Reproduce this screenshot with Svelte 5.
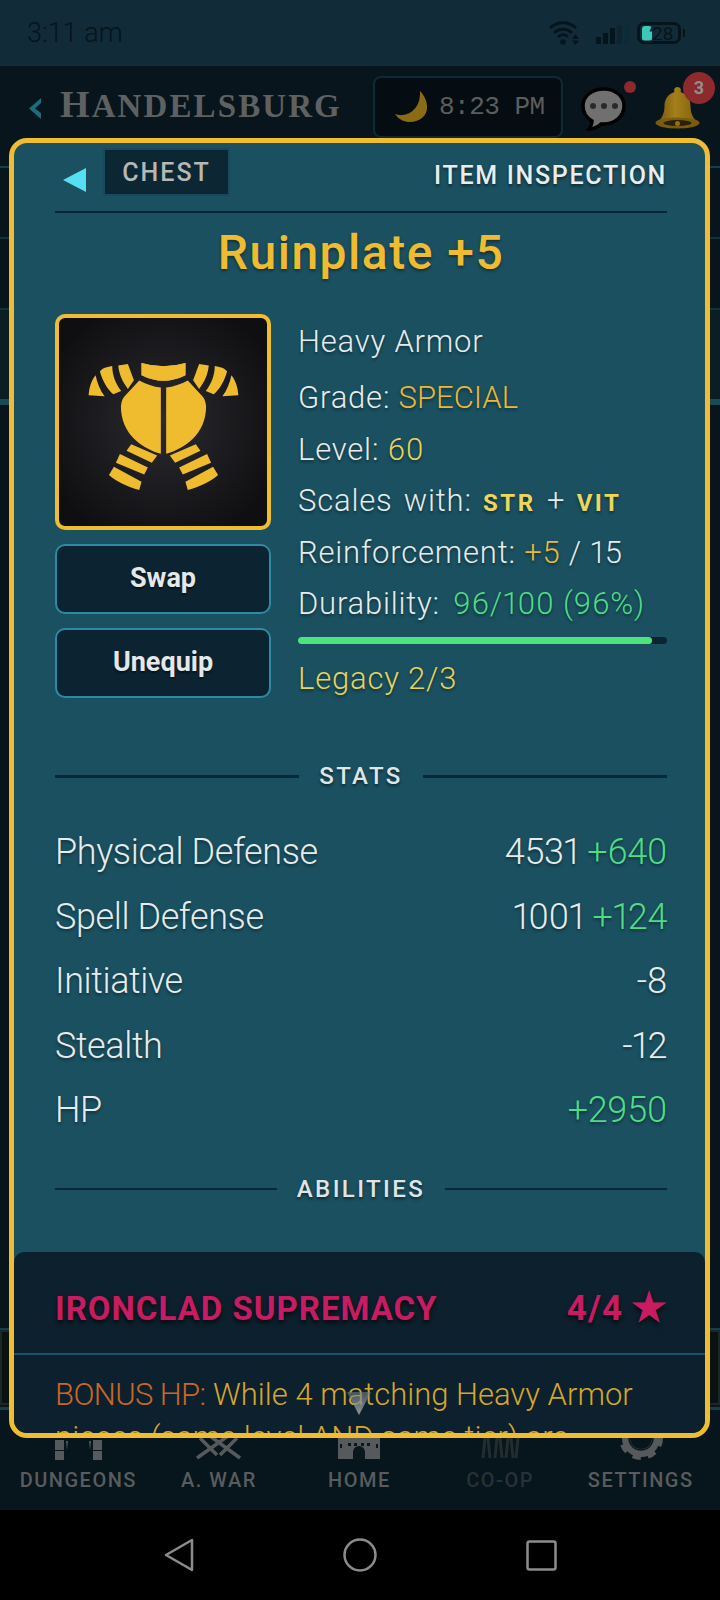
<script>
  const stats = [
    { name: 'Physical Defense', base: '4531', bonus: '+640' },
    { name: 'Spell Defense', base: '1001', bonus: '+124' },
    { name: 'Initiative', base: '-8', bonus: '' },
    { name: 'Stealth', base: '-12', bonus: '' },
    { name: 'HP', base: '', bonus: '+2950' }
  ];
  const armor = [
    'M303 188Q370 208 435 188L435 225Q370 258 303 225Z',
    'M361 262L361 461C305 445 241 402 241 318C243 302 247 292 255 285L296 241C315 252 340 260 361 262Z',
    'M233 196L262 191L280 240L262 266C245 245 235 220 233 196Z',
    'M215 197C195 200 183 205 178 214C185 240 200 268 218 282L242 272C225 250 215 225 215 197Z',
    'M165 225C152 240 145 265 144 285L192 288C178 270 170 248 165 225Z',
    'M272 432L350 466L334 488L258 452Z',
    'M238 462L322 502L311 523L226 488Z',
    'M220 500L303 545L296 570C260 560 228 545 205 525Z'
  ];
</script>

<div class="phone">
  <div class="status">
    <span class="clock">3:11 am</span>
    <div class="status-icons">
      <svg class="wifi" width="32" height="24" viewBox="0 0 32 24" fill="none" stroke="#06141c" stroke-width="2.800">
        <path d="M1 7C8 0 20 0 27 7M5 12C10 7 18 7 23 12M9 16C12 13 16 13 19 16" />
        <circle cx="14" cy="21" r="2.800" fill="#06141c" stroke="none" />
        <path d="M23 18l3.500-5 3.500 5zM23 19.500h7l-3.500 4.500z" fill="#06141c" stroke="none" />
      </svg>
      <svg class="signal" width="33" height="21" viewBox="0 0 33 21">
        <rect x="0" y="14" width="5" height="7" fill="#06141c" />
        <rect x="7" y="10" width="5" height="11" fill="#06141c" />
        <rect x="14" y="5" width="5" height="16" fill="#06141c" />
        <rect x="21" y="2" width="5" height="19" fill="#0d2531" />
        <rect x="28" y="0" width="5" height="21" fill="#0f2a37" />
      </svg>
      <div class="battery"><i></i><span>28</span></div>
      <b class="cap"></b>
    </div>
  </div>

  <header class="top">
    <svg class="chev" width="14" height="21" viewBox="0 0 14 21"><path d="M13 0L1 10.500 13 21V15L7 10.500 13 5z" fill="#1d6a7a"/></svg>
    <span class="town"><span class="big">H</span>ANDELSBURG</span>
    <div class="time">
      <svg width="33" height="32" viewBox="0 0 33 32"><path d="M25 0C33 8 35 21 27 27C19 33 7 33 0 23C9 27 26 21 25 0Z" fill="#8a6c14"/></svg>
      <span>8:23 PM</span>
    </div>
    <div class="chat">
      <svg width="45" height="44" viewBox="0 0 45 44">
        <path d="M23 2C11 2 2 9 2 19c0 7 4 12 9 15 0 3-1 5-3 8 5 0 9-2 12-5h3c11 0 20-8 20-18S34 2 23 2z" fill="#707070" stroke="#000" stroke-width="3.500"/>
        <circle cx="12" cy="19" r="3" fill="#2a2a2a"/><circle cx="23" cy="19" r="3" fill="#2a2a2a"/><circle cx="34" cy="19" r="3" fill="#2a2a2a"/>
      </svg>
      <i class="dot"></i>
    </div>
    <div class="bell">
      <svg width="45" height="42" viewBox="0 0 45 42">
        <defs><linearGradient id="bg" x1="0" y1="0" x2="1" y2="0"><stop offset="0" stop-color="#6f540c"/><stop offset="0.45" stop-color="#a5801a"/><stop offset="1" stop-color="#7d5f0e"/></linearGradient></defs>
        <path d="M22.500 0c3 0 4 3 3 5 7 2 10 8 10 14 0 8 3 13 8 17H1.500c5-4 8-9 8-17 0-6 3-12 10-14-1-2 0-5 3-5z" fill="url(#bg)"/>
        <ellipse cx="22.500" cy="36" rx="22" ry="5.500" fill="#7a5c0c"/>
        <ellipse cx="22.500" cy="36" rx="14" ry="3" fill="#2a1f08"/>
        <circle cx="22.500" cy="36.500" r="2.500" fill="#94710f"/>
      </svg>
      <span class="badge">3</span>
    </div>
  </header>

  <div class="backdrop">
    <div class="band"></div>
    <div class="band"></div>
    <div class="band light"></div>
    <div class="lower"><div class="lower-box"></div></div>
  </div>

  <nav class="nav">
    <div class="nav-item">
      <svg width="50" height="50" viewBox="0 0 50 50" fill="#575a5c">
        <rect x="2" y="30" width="9" height="10"/><rect x="2" y="41" width="9" height="9"/>
        <rect x="40" y="30" width="9" height="10"/><rect x="40" y="41" width="9" height="9"/>
        <path d="M13 31l1 9 1-9zM36 31l1 9 1-9z"/>
      </svg>
      <span>DUNGEONS</span>
    </div>
    <div class="nav-item">
      <svg width="50" height="50" viewBox="0 0 50 50" fill="none" stroke="#575a5c" stroke-width="3.500">
        <path d="M3 48L34 26M6 28L23 45M46 48L16 26M43 28L26 45"/>
      </svg>
      <span>A. WAR</span>
    </div>
    <div class="nav-item">
      <svg width="50" height="50" viewBox="0 0 50 50">
        <path d="M4 28h42v21H4z" fill="#575a5c"/>
        <path d="M19 49v-7a6 6 0 0 1 12 0v7z" fill="#0a171d"/>
        <path d="M14 33h3v3h-3zM20 33h3v3h-3zM27 33h3v3h-3zM33 33h3v3h-3zM6 34h2v4H6zM42 34h2v4h-2z" fill="#0a171d"/>
      </svg>
      <span>HOME</span>
    </div>
    <div class="nav-item dim">
      <svg width="50" height="50" viewBox="0 0 50 50" fill="none" stroke="#232d31" stroke-width="3">
        <path d="M8 48L10 28M15 48L13 28M20 48L22 28M27 48L25 28M31 48L33 28M38 48L36 28M41 48L43 28"/>
      </svg>
      <span>CO-OP</span>
    </div>
    <div class="nav-item">
      <svg width="50" height="50" viewBox="0 0 50 50" fill="none" stroke="#575a5c">
        <circle cx="25" cy="28" r="15" stroke-width="8"/>
        <circle cx="25" cy="28" r="19.500" stroke-width="5" stroke-dasharray="8.200 7.120"/>
        <circle cx="25" cy="28" r="12" stroke="#0a171d" stroke-width="1.500"/>
      </svg>
      <span>SETTINGS</span>
    </div>
  </nav>

  <div class="sys">
    <svg width="30" height="34" viewBox="0 0 30 34" fill="none" stroke="#8c8c8c" stroke-width="2.500" stroke-linejoin="round"><path d="M28 2L2 17l26 15z" /></svg>
    <svg width="34" height="34" viewBox="0 0 34 34" fill="none" stroke="#8c8c8c" stroke-width="2.500"><circle cx="17" cy="17" r="15.500"/></svg>
    <svg width="31" height="31" viewBox="0 0 31 31" fill="none" stroke="#8c8c8c" stroke-width="2.500"><rect x="1.500" y="1.500" width="28" height="28" rx="2"/></svg>
  </div>

  <section class="modal">
    <div class="modal-top">
      <svg class="back" width="23" height="24" viewBox="0 0 23 24"><path d="M23 0V24L0 12z" fill="#54dff2"/></svg>
      <span class="slot">CHEST</span>
      <span class="inspect">ITEM INSPECTION</span>
    </div>
    <h1>Ruinplate +5</h1>

    <div class="detail">
      <div class="left">
        <div class="art">
          <svg width="207" height="207" viewBox="58 56 622 622" fill="#efbc30">
            {#each armor as d}
              <path {d} />
              <path {d} transform="matrix(-1 0 0 1 738 0)" />
            {/each}
          </svg>
        </div>
        <button>Swap</button>
        <button>Unequip</button>
      </div>
      <div class="right">
        <p class="r-first">Heavy Armor</p>
        <p>Grade: <em class="gold special">SPECIAL</em></p>
        <p>Level: <em class="yellow">60</em></p>
        <p class="scales">Scales with: <strong>STR</strong> + <strong>VIT</strong></p>
        <p>Reinforcement: <em class="gold">+5</em> / 15</p>
        <p>Durability: <em class="green dur">96/100 (96%)</em></p>
        <div class="bar"><div class="fill" style="width: 96%"></div></div>
        <p class="yellow legacy">Legacy 2/3</p>
      </div>
    </div>

    <div class="divider stats-d"><span>STATS</span></div>
    <div class="stats">
      {#each stats as s}
        <div class="row">
          <span>{s.name}</span>
          <span class="val">{s.base}{#if s.base && s.bonus}&nbsp;{/if}{#if s.bonus}<em class="green">{s.bonus}</em>{/if}</span>
        </div>
      {/each}
    </div>
    <div class="divider ab-d"><span>ABILITIES</span></div>

    <div class="ability">
      <div class="ab-head">
        <span class="ab-name">IRONCLAD SUPREMACY</span>
        <span class="ab-rank">4/4 <span class="star">★</span></span>
      </div>
      <p class="ab-text"><em class="orange">BONUS HP:</em> While 4 matching Heavy Armor pieces (same level AND same tier) are</p>
    </div>
    <svg class="pointer" width="24" height="23" viewBox="0 0 24 23">
      <defs><linearGradient id="pg" x1="0" y1="0" x2="0" y2="1"><stop offset="0" stop-color="#6f8187" stop-opacity="0.55"/><stop offset="1" stop-color="#9a9f9f" stop-opacity="0.95"/></linearGradient></defs>
      <path d="M0 0H24L12 23Z" fill="url(#pg)"/>
    </svg>
  </section>
</div>

<style>
  :global(body) { margin: 0; background: #000; }
  .phone { position: relative; width: 720px; height: 1600px; overflow: hidden; background: #000; font-family: Roboto, sans-serif; color: #e6ecec; display: flex; flex-direction: column; }
  .status { height: 66px; background: #122b38; display: flex; align-items: center; justify-content: space-between; padding: 0 35px 0 27px; box-sizing: border-box; flex: none; }
  .clock { font-size: 27px; font-weight: 300; color: #06141c; }
  .status-icons { display: flex; align-items: center; }
  .signal { margin-left: 15px; }
  .battery { width: 44px; height: 22px; box-sizing: border-box; margin-left: 8px; border: 3px solid #06141c; border-radius: 7px; display: flex; align-items: center; font-size: 19px; color: #06141c; }
  .battery i { width: 10px; height: 15px; margin-left: 2px; background: #3cc7b6; border-radius: 3px; clip-path: polygon(0 0, 100% 0, 75% 40%, 100% 40%, 100% 100%, 0 100%); }
  .battery span { line-height: 1; }
  .cap { width: 2px; height: 8px; background: #06141c; margin-left: 2px; }

  .top { height: 102px; background: #08151c; border-bottom: 2px solid #163d4a; display: flex; align-items: flex-start; padding: 0 20px 0 28px; box-sizing: border-box; flex: none; }
  .chev { margin-top: 32px; flex: none; }
  .town { font-family: "Liberation Serif", serif; font-weight: 700; font-size: 33px; color: #5f6061; margin: 18px 0 0 18px; letter-spacing: 2.100px; line-height: 40px; white-space: nowrap; }
  .big { font-size: 38px; }
  .time { margin: 10px 0 0 auto; width: 190px; height: 62px; box-sizing: border-box; border: 2px solid #0d2a37; border-radius: 8px; background: #050d12; display: flex; align-items: center; padding-left: 20px; gap: 11px; flex: none; }
  .time span { font-family: "Liberation Mono", monospace; font-size: 26px; color: #5d5d5d; letter-spacing: -0.500px; white-space: nowrap; }
  .chat { position: relative; margin: 21px 0 0 18px; flex: none; }
  .dot { position: absolute; left: 43px; top: -6px; width: 12px; height: 12px; border-radius: 50%; background: #8c2a2e; }
  .bell { position: relative; margin: 21px 0 0 29px; flex: none; }
  .badge { position: absolute; left: 28px; top: -15px; width: 32px; height: 32px; border-radius: 50%; background: #8c2a2e; color: #8f8f8f; font: 700 18px/32px Roboto, sans-serif; text-align: center; }

  .backdrop { flex: 1; background: #08151c; display: flex; flex-direction: column; min-height: 0; }
  .band { height: 69px; border-bottom: 2px solid #12313d; flex: none; }
  .band.light { height: 89px; background: #0c1e25; border-bottom: 6px solid #1a4a58; }
  .lower { margin-top: auto; height: 82px; box-sizing: border-box; border-top: 2px solid #163d4a; border-bottom: 3px solid #163d4a; padding-bottom: 2px; }
  .lower-box { height: 100%; box-sizing: border-box; border: 2px solid #1a2628; background: #0a1210; }

  .nav { height: 100px; flex: none; background: #07151c; display: grid; grid-template-columns: repeat(5, 1fr); padding: 1px 9px 17px 8px; box-sizing: border-box; }
  .nav-item { display: flex; flex-direction: column; align-items: center; gap: 8px; font-size: 20px; line-height: 24px; letter-spacing: 1.500px; color: #585c5e; font-weight: 500; white-space: nowrap; }
  .nav-item svg { margin-top: -1px; }
  .nav-item.dim { color: #273238; }
  .sys { height: 90px; flex: none; background: #000; display: flex; justify-content: center; align-items: center; gap: 149px; }

  .modal { position: absolute; left: 9px; top: 138px; width: 701px; height: 1300px; box-sizing: border-box; border: 5px solid #f0bc30; border-radius: 18px; background: #1a5060; overflow: hidden; padding: 0 38px 0 41px; display: flex; flex-direction: column; }
  .modal-top { display: flex; align-items: flex-start; height: 70px; box-sizing: border-box; flex: none; border-bottom: 2px solid #0b2735; }
  .back { margin: 25px 0 0 8px; flex: none; }
  .slot { margin: 5px 0 0 17px; width: 127px; height: 48px; box-sizing: border-box; background: #0c2633; border: 2px solid #194a5b; color: #b5b8b4; font-size: 25px; font-weight: 500; letter-spacing: 2px; text-align: center; line-height: 45px; }
  .inspect { margin: 18px 0 0 auto; color: #e9eded; font-size: 25px; line-height: 30px; letter-spacing: 1.700px; font-weight: 500; text-shadow: 0 2px 3px rgba(0,0,0,.5); }
  h1 { margin: 10px 0 0; text-align: center; font-size: 48px; line-height: 60px; font-weight: 500; color: #efbc30; flex: none; letter-spacing: 1.500px; text-shadow: 0 2px 3px rgba(0,0,0,.4); }
  .detail { display: flex; gap: 27px; margin-top: 31px; height: 442px; flex: none; }
  .left { width: 216px; flex: none; display: flex; flex-direction: column; gap: 14px; }
  .art { width: 216px; height: 216px; box-sizing: border-box; border: 4.500px solid #f0bc30; border-radius: 10px; background: radial-gradient(circle, #2b2b2f 0%, #0f0f12 85%); display: flex; align-items: center; justify-content: center; }
  button { width: 216px; height: 70px; box-sizing: border-box; padding: 0 0 2px; background: #0c2432; border: 2px solid #2d8aa4; border-radius: 10px; color: #e4e8e8; font: 700 27px Roboto, sans-serif; text-shadow: 0 2px 2px rgba(0,0,0,.5); }
  .right { flex: 1; min-width: 0; font-size: 31px; font-weight: 300; font-variant-numeric: proportional-nums; }
  .right p { margin: 0; height: 51.500px; line-height: 52px; letter-spacing: 0.800px; white-space: nowrap; text-shadow: 0 2px 3px rgba(0,0,0,.4); }
  .right .r-first { height: 58px; line-height: 55px; }
  .right em, .val em, .ab-text em { font-style: normal; }
  .right .scales { word-spacing: 3px; }
  .special { letter-spacing: 0; }
  .dur { margin-left: 5px; }
  .gold { color: #e8b838; }
  .yellow { color: #e6d35c; }
  .green { color: #4fdc85; }
  .orange { color: #c96628; letter-spacing: -0.600px; }
  strong { font-size: 24px; font-weight: 700; color: #eed65a; letter-spacing: 2.500px; }
  .bar { height: 7px; background: #0c2432; border-radius: 4px; margin-top: 7.500px; }
  .fill { height: 100%; background: #4fe37f; border-radius: 4px; }
  .right .legacy { margin-top: 9px; }

  .divider { display: flex; align-items: center; gap: 20px; flex: none; font-size: 24px; font-weight: 500; letter-spacing: 2.400px; color: #dfe4e4; }
  .divider::before, .divider::after { content: ''; flex: 1; height: 3px; background: #0b2735; }
  .divider span { text-shadow: 0 2px 3px rgba(0,0,0,.5); }
  .stats-d { height: 40px; }
  .stats { margin-top: 24px; flex: none; font-size: 36px; font-weight: 300; font-variant-numeric: proportional-nums; }
  .row { display: flex; justify-content: space-between; height: 64.500px; line-height: 64px; letter-spacing: -0.400px; text-shadow: 0 2px 3px rgba(0,0,0,.4); }
  .ab-d { margin-top: 31px; height: 30px; }
  .ab-d::before, .ab-d::after { height: 2px; }
  .ability { margin: 48px -38px 0 -41px; flex: none; background: #0c212d; border-radius: 10px 10px 0 0; }
  .ab-head { display: flex; justify-content: space-between; align-items: center; height: 103px; box-sizing: border-box; padding: 12px 38px 0 41px; border-bottom: 2px solid #1d5264; font-weight: 700; font-size: 33px; color: #c81b62; letter-spacing: 1px; text-shadow: 0 3px 4px rgba(0,0,0,.7); }
  .ab-rank { display: flex; align-items: center; gap: 8px; font-size: 35px; }
  .star { font-size: 40px; line-height: 40px; letter-spacing: 0; }
  .ab-text { margin: 0; padding: 18px 38px 0 41px; font-size: 31px; font-weight: 300; line-height: 43px; color: #d6a62d; }
  .pointer { position: absolute; left: 333px; top: 1249px; }
</style>
